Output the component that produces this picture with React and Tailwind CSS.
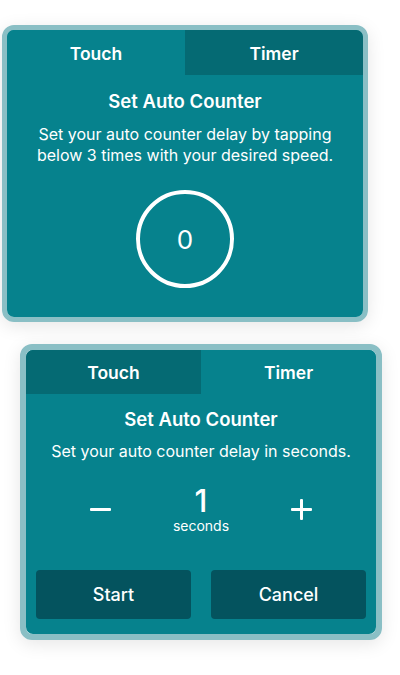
import React, { useState } from 'react';

const font = { fontFamily: 'Inter, "Noto Sans", sans-serif' };

function TouchCard() {
  const [count, setCount] = useState(0);
  return (
    <div className="ml-[2px] w-[366px] rounded-[12px] border-[5px] border-[#8abfc5] shadow-[0_4px_18px_rgba(0,0,0,0.10)]">
      <div className="rounded-[7px] overflow-hidden bg-[#06828d] text-white">
        <div className="flex h-[45px] text-[17.5px] font-semibold">
          <div className="flex-1 flex items-center justify-center pt-[3px] bg-[#06828d]">Touch</div>
          <div className="flex-1 flex items-center justify-center pt-[3px] bg-[#056a73]">Timer</div>
        </div>
        <div className="flex flex-col items-center pt-[15px] pb-[29px]">
          <div className="text-[18.5px] leading-[22px] font-semibold">Set Auto Counter</div>
          <p className="mt-[12px] text-[16px] leading-[21px] text-center">
            Set your auto counter delay by tapping<br />below 3 times with your desired speed.
          </p>
          <button
            onClick={() => setCount((c) => (c + 1) % 4)}
            className="mt-[24px] w-[98px] h-[98px] rounded-full border-[4px] border-white flex items-center justify-center text-[26px]"
          >
            {count}
          </button>
        </div>
      </div>
    </div>
  );
}

function TimerCard() {
  const [secs, setSecs] = useState(1);
  return (
    <div className="ml-[20px] mt-[22px] w-[362px] rounded-[12px] border-[6px] border-[#8abfc5] shadow-[0_4px_18px_rgba(0,0,0,0.10)]">
      <div className="rounded-[7px] overflow-hidden bg-[#06828d] text-white">
        <div className="flex h-[44px] text-[17.5px] font-semibold">
          <div className="w-[175px] flex items-center justify-center pt-[3px] bg-[#056a73]">Touch</div>
          <div className="flex-1 flex items-center justify-center pt-[3px] bg-[#06828d]">Timer</div>
        </div>
        <div className="flex flex-col items-center pt-[14px] pb-[15px]">
          <div className="text-[18.5px] leading-[22px] font-semibold">Set Auto Counter</div>
          <p className="mt-[11px] text-[16px] leading-[21px] text-center">
            Set your auto counter delay in seconds.
          </p>
          <div className="mt-[22px] w-full flex items-center justify-between px-[64px]">
            <button onClick={() => setSecs((s) => Math.max(1, s - 1))} className="w-[21px] h-[21px] flex items-center justify-center">
              <span className="block w-[21px] h-[3px] bg-white rounded-[1px]" />
            </button>
            <div className="flex flex-col items-center">
              <div className="text-[31px] leading-[34px] font-medium">{secs}</div>
              <div className="text-[14px] leading-[16px]">seconds</div>
            </div>
            <button onClick={() => setSecs((s) => s + 1)} className="relative w-[21px] h-[21px]">
              <span className="absolute left-0 top-[9px] w-[21px] h-[3px] bg-white rounded-[1px]" />
              <span className="absolute top-0 left-[9px] w-[3px] h-[21px] bg-white rounded-[1px]" />
            </button>
          </div>
          <div className="mt-[36px] w-full flex gap-[20px] px-[10px]">
            <button className="flex-1 h-[49px] rounded-[4px] bg-[#04535e] text-[18px] font-medium">Start</button>
            <button className="flex-1 h-[49px] rounded-[4px] bg-[#04535e] text-[18px] font-medium">Cancel</button>
          </div>
        </div>
      </div>
    </div>
  );
}

export default function App() {
  return (
    <div className="w-[400px] h-[675px] bg-white pt-[25px]" style={font}>
      <TouchCard />
      <TimerCard />
    </div>
  );
}
